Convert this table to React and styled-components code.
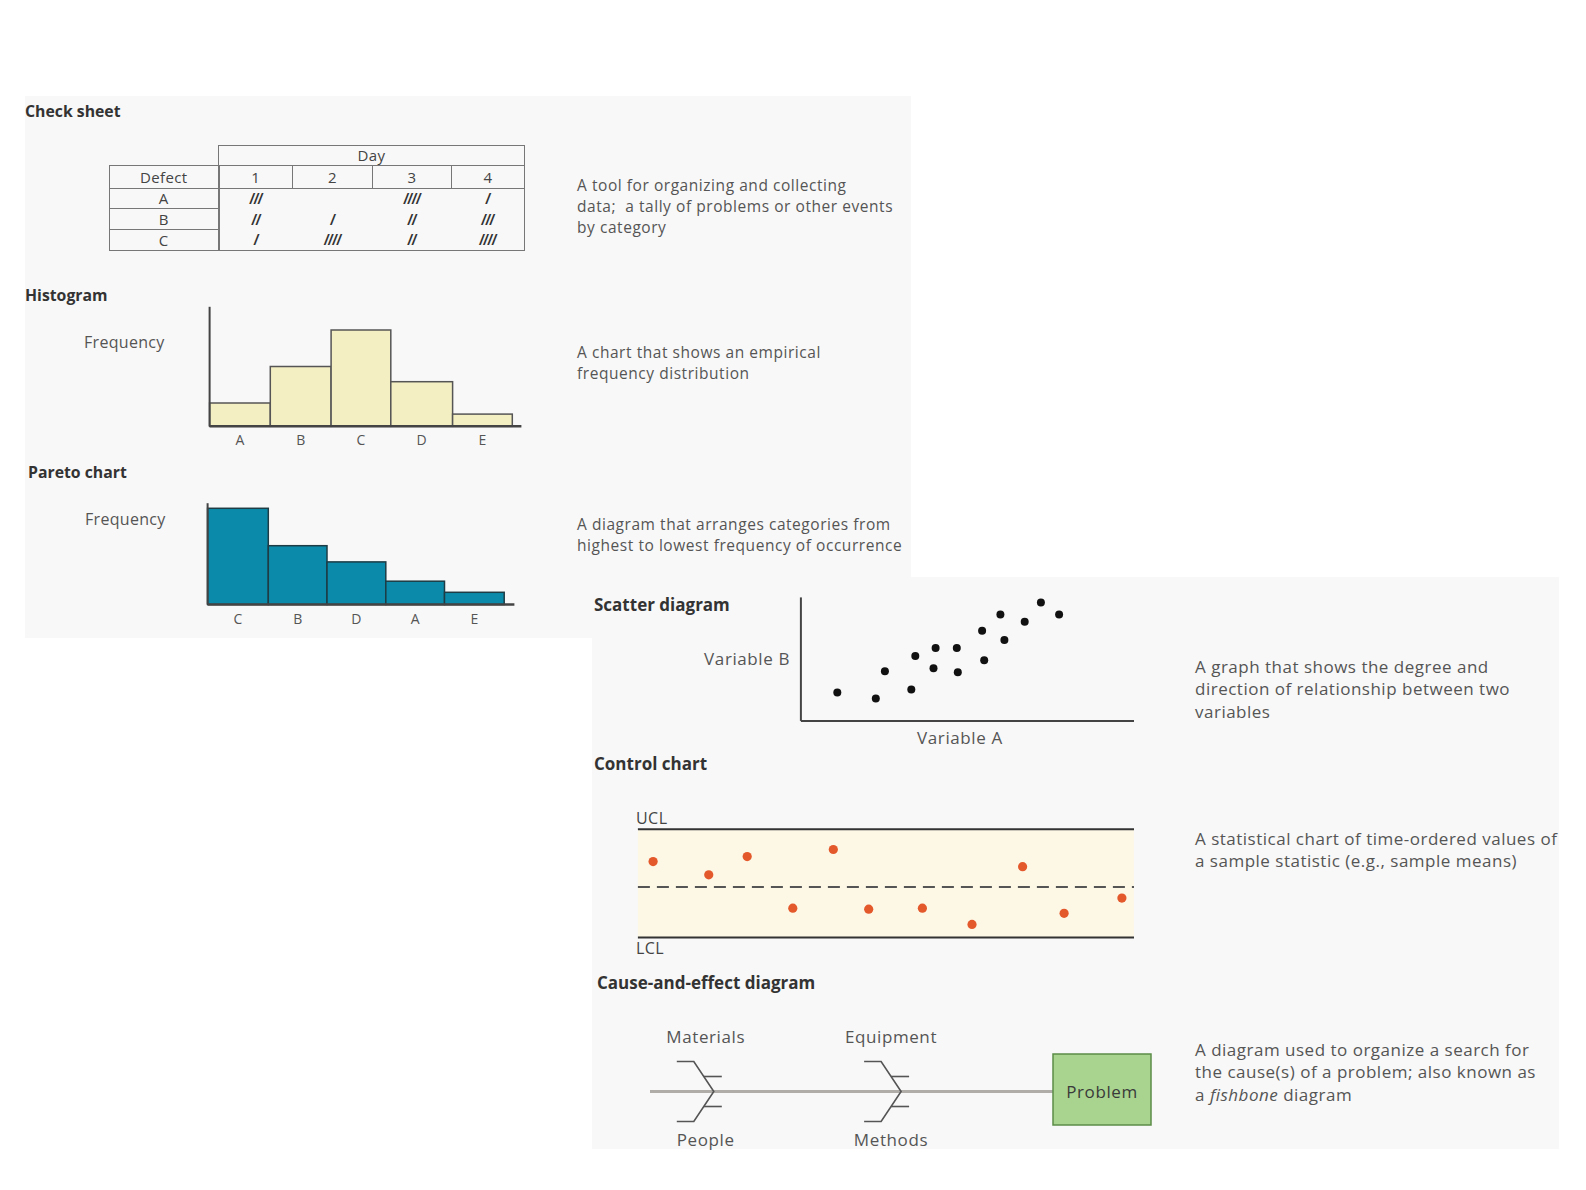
import React from "react";
import styled, { createGlobalStyle } from "styled-components";

const GlobalStyle = createGlobalStyle`
  html, body {
    margin: 0;
    padding: 0;
    background: #fff;
  }
  body {
    font-family: "Open Sans", "Liberation Sans", sans-serif;
    color: #555;
  }
`;

const Page = styled.div`
  width: 1586px;
  height: 1190px;
  padding: 96px 0 0 25px;
  box-sizing: border-box;
  background: #fff;
  overflow: hidden;
`;

const Panel = styled.div`
  position: relative;
  background: #f8f8f8;
  width: ${props => props.$w}px;
  height: ${props => props.$h}px;
  margin-left: ${props => props.$ml || 0}px;
  margin-top: ${props => props.$mt || 0}px;
`;

const Section = styled.section`
  height: ${props => props.$h}px;
  padding-top: ${props => props.$pt}px;
  box-sizing: border-box;
  display: flex;
  flex-direction: column;
`;

const Title = styled.h2`
  margin: ${props => props.$mt || 0}px 0 0 ${props => props.$ml || 0}px;
  font-family: "Open Sans", "Liberation Sans", sans-serif;
  font-size: ${props => (props.$big ? 17 : 15.8)}px;
  line-height: 20px;
  font-weight: 700;
  color: #333;
  white-space: nowrap;
`;

const Body = styled.div`
  display: grid;
  grid-template-columns: ${props => props.$cols};
  flex: 1;
`;

const ChartCell = styled.div`
  display: flex;
  flex-direction: row;
  align-items: flex-start;
  padding-top: ${props => props.$pt || 0}px;
  padding-left: ${props => props.$pl || 0}px;
`;

const SideCol = styled.div`
  display: flex;
  flex-direction: column;
`;

const AxisLabel = styled.div`
  width: ${props => props.$w}px;
  margin-top: ${props => props.$mt || 0}px;
  padding-right: ${props => props.$pr || 0}px;
  box-sizing: border-box;
  text-align: ${props => props.$align || "left"};
  font-size: ${props => (props.$big ? 17 : 16)}px;
  letter-spacing: ${props => (props.$big ? 0.6 : 0.3)}px;
  line-height: 22px;
  color: #555;
  white-space: nowrap;
`;

const Description = styled.p`
  margin: 0;
  padding-top: ${props => props.$pt}px;
  font-size: ${props => (props.$big ? 17 : 15.5)}px;
  letter-spacing: ${props => (props.$big ? 0.5 : 0.55)}px;
  line-height: ${props => (props.$big ? 22.3 : 20.75)}px;
  color: #555;
  white-space: nowrap;
  em {
    font-style: italic;
  }
`;

/* ---------- check sheet ---------- */

const CheckTable = styled.table`
  border-collapse: collapse;
  table-layout: fixed;
  font-family: "Open Sans", "Liberation Sans", sans-serif;
  font-size: 15px;
  letter-spacing: 0.4px;
  color: #444;
  td {
    padding: 0;
    text-align: center;
    vertical-align: middle;
    line-height: 1;
  }
`;

const HeadCell = styled.td`
  border: 1px solid #777;
  height: ${props => props.$h}px;
`;

const BlankCell = styled.td`
  border: none;
`;

const DefectCell = styled.td`
  border: 1px solid #777;
  border-right: 2px solid #777;
  height: ${props => props.$h}px;
`;

const TallyCell = styled.td`
  font-family: "Liberation Sans", Arial, sans-serif;
  font-style: italic;
  font-weight: 700;
  font-size: 15px;
  letter-spacing: 0;
  color: #333;
  border-right: ${props => (props.$last ? "1px solid #777" : "none")};
  border-bottom: ${props => (props.$bottom ? "1px solid #777" : "none")};
`;

const tallyRows = [
  { d: "A", t: ["///", "", "////", "/"], h: 19 },
  { d: "B", t: ["//", "/", "//", "///"], h: 20 },
  { d: "C", t: ["/", "////", "//", "////"], h: 20 }
];

const CheckSheet = () => (
  <CheckTable>
    <colgroup>
      <col style={{ width: 109 }} />
      <col style={{ width: 74 }} />
      <col style={{ width: 80 }} />
      <col style={{ width: 79 }} />
      <col style={{ width: 73 }} />
    </colgroup>
    <tbody>
      <tr>
        <BlankCell />
        <HeadCell colSpan={4} $h={19}>
          Day
        </HeadCell>
      </tr>
      <tr>
        <DefectCell $h={22}>Defect</DefectCell>
        <HeadCell $h={22}>1</HeadCell>
        <HeadCell $h={22}>2</HeadCell>
        <HeadCell $h={22}>3</HeadCell>
        <HeadCell $h={22}>4</HeadCell>
      </tr>
      {tallyRows.map((row, ri) => (
        <tr key={row.d}>
          <DefectCell $h={row.h}>{row.d}</DefectCell>
          {row.t.map((t, i) => (
            <TallyCell
              key={i}
              $last={i === 3}
              $bottom={ri === tallyRows.length - 1}
            >
              {t}
            </TallyCell>
          ))}
        </tr>
      ))}
    </tbody>
  </CheckTable>
);

/* ---------- bar charts ---------- */

const Svg = styled.svg`
  display: block;
  overflow: visible;
  font-family: "Open Sans", "Liberation Sans", sans-serif;
`;

const histBars = [
  { l: "A", x: 9.6, w: 60.7, top: 98 },
  { l: "B", x: 70.3, w: 60.8, top: 61.5 },
  { l: "C", x: 131.1, w: 59.7, top: 25 },
  { l: "D", x: 190.8, w: 61.8, top: 76.7 },
  { l: "E", x: 252.6, w: 59.7, top: 109.1 }
];

const paretoBars = [
  { l: "C", x: 7.6, w: 60.7, top: 26.3 },
  { l: "B", x: 68.3, w: 58.7, top: 63.7 },
  { l: "D", x: 127, w: 58.8, top: 79.9 },
  { l: "A", x: 185.8, w: 58.7, top: 99.2 },
  { l: "E", x: 244.5, w: 59.7, top: 110.3 }
];

const BarChart = ({ bars, base, axisX, axisTop, axisRight, fill, stroke, labelY }) => (
  <Svg width="330" height="150">
    {bars.map(b => (
      <rect
        key={b.l}
        x={b.x}
        y={b.top}
        width={b.w}
        height={base - b.top}
        fill={fill}
        stroke={stroke}
        strokeWidth="1.5"
      />
    ))}
    <line x1={axisX} y1={axisTop} x2={axisX} y2={base} stroke="#444" strokeWidth="2" />
    <line x1={axisX} y1={base} x2={axisRight} y2={base} stroke="#444" strokeWidth="2.5" />
    {bars.map(b => (
      <text
        key={b.l}
        x={b.x + b.w / 2}
        y={labelY}
        textAnchor="middle"
        fontSize="14"
        fill="#555"
      >
        {b.l}
      </text>
    ))}
  </Svg>
);

/* ---------- scatter ---------- */

const scatterDots = [
  [42.3, 100.6], [80.8, 106.6], [89.9, 79.3], [116.3, 97.5], [120.3, 64.1],
  [138.5, 76.3], [140.6, 56], [161.8, 56], [162.8, 80.3], [187.1, 38.8],
  [189.2, 68.2], [205.4, 22.6], [209.4, 47.9], [229.7, 29.7], [245.9, 10.4],
  [264.1, 22.6]
];

const Scatter = () => (
  <Svg width="345" height="160">
    <line x1="5.9" y1="5.4" x2="5.9" y2="128.9" stroke="#444" strokeWidth="2" />
    <line x1="5.9" y1="128.9" x2="339" y2="128.9" stroke="#444" strokeWidth="2" />
    {scatterDots.map(([x, y], i) => (
      <circle key={i} cx={x} cy={y} r="4" fill="#111" />
    ))}
    <text
      x="164.9"
      y="152"
      textAnchor="middle"
      fontSize="17"
      letterSpacing="0.6"
      fill="#555"
    >
      Variable A
    </text>
  </Svg>
);

/* ---------- control chart ---------- */

const controlDots = [
  [31.1, 61.6], [86.75, 74.8], [125.2, 56.6], [170.8, 108.2], [211.3, 49.5],
  [246.7, 109.2], [300.4, 108.2], [350, 124.4], [400.6, 66.7], [442.1, 113.3],
  [499.9, 98.1]
];

const ControlChart = () => (
  <Svg width="515" height="160">
    <rect x="15.9" y="29.2" width="496" height="108.4" fill="#fdf7e6" />
    <text x="13.9" y="23.6" fontSize="16" letterSpacing="0.5" fill="#444">
      UCL
    </text>
    <line x1="15.9" y1="29.2" x2="512" y2="29.2" stroke="#333" strokeWidth="2" />
    <line
      x1="15.9"
      y1="86.9"
      x2="512"
      y2="86.9"
      stroke="#555"
      strokeWidth="2"
      strokeDasharray="12 7"
    />
    <line x1="15.9" y1="137.6" x2="512" y2="137.6" stroke="#333" strokeWidth="2" />
    <text x="13.9" y="154" fontSize="16" letterSpacing="0.5" fill="#444">
      LCL
    </text>
    {controlDots.map(([x, y], i) => (
      <circle key={i} cx={x} cy={y} r="4.6" fill="#e4592b" />
    ))}
  </Svg>
);

/* ---------- fishbone ---------- */

const SPINE = 81.5;

const Bone = ({ ax }) => (
  <g stroke="#555" strokeWidth="1.6" fill="none">
    <path
      d={`M ${ax - 37} ${SPINE - 30} H ${ax - 20} L ${ax} ${SPINE} L ${ax - 20} ${SPINE + 30} H ${ax - 37}`}
    />
    <path d={`M ${ax - 10} ${SPINE - 15} H ${ax + 8}`} />
    <path d={`M ${ax - 10} ${SPINE + 15} H ${ax + 8}`} />
  </g>
);

const boneLabels = [
  { t: "Materials", x: 68.7, y: 33 },
  { t: "Equipment", x: 254, y: 33 },
  { t: "People", x: 68.7, y: 136 },
  { t: "Methods", x: 254, y: 136 }
];

const Fishbone = () => (
  <Svg width="520" height="145">
    <line x1="13" y1={SPINE} x2="416" y2={SPINE} stroke="#b0aca8" strokeWidth="3" />
    <Bone ax={76.8} />
    <Bone ax={264.1} />
    {boneLabels.map(l => (
      <text
        key={l.t}
        x={l.x}
        y={l.y}
        textAnchor="middle"
        fontSize="17"
        letterSpacing="0.6"
        fill="#555"
      >
        {l.t}
      </text>
    ))}
    <rect x="416" y="44" width="98" height="71" fill="#a9d48f" stroke="#5b8c47" strokeWidth="1.5" />
    <text
      x="465"
      y="87.5"
      textAnchor="middle"
      fontSize="17"
      letterSpacing="0.6"
      fill="#3a3a3a"
    >
      Problem
    </text>
  </Svg>
);

const App = () => (
  <Page>
    <GlobalStyle />
    <Panel $w={886} $h={542}>
      <Section $h={186} $pt={5}>
        <Title>Check sheet</Title>
        <Body $cols="552px 1fr">
          <ChartCell $pt={24} $pl={84}>
            <CheckSheet />
          </ChartCell>
          <Description $pt={54}>
            A tool for organizing and collecting
            <br />
            data;&nbsp; a tally of problems or other events
            <br />
            by category
          </Description>
        </Body>
      </Section>

      <Section $h={177} $pt={3}>
        <Title>Histogram</Title>
        <Body $cols="552px 1fr">
          <ChartCell $pl={59}>
            <AxisLabel $w={116} $mt={26}>
              Frequency
            </AxisLabel>
            <BarChart
              bars={histBars}
              base={121.3}
              axisX={9.6}
              axisTop={1.8}
              axisRight={321.4}
              fill="#f4efc3"
              stroke="#555"
              labelY={140.3}
            />
          </ChartCell>
          <Description $pt={37}>
            A chart that shows an empirical
            <br />
            frequency distribution
          </Description>
        </Body>
      </Section>

      <Section $h={179} $pt={3}>
        <Title $ml={3}>Pareto chart</Title>
        <Body $cols="552px 1fr">
          <ChartCell $pl={60}>
            <AxisLabel $w={115} $mt={26}>
              Frequency
            </AxisLabel>
            <BarChart
              bars={paretoBars}
              base={122.5}
              axisX={7.6}
              axisTop={21.2}
              axisRight={314.4}
              fill="#0b8ba9"
              stroke="#1d3c46"
              labelY={141.6}
            />
          </ChartCell>
          <Description $pt={32}>
            A diagram that arranges categories from
            <br />
            highest to lowest frequency of occurrence
          </Description>
        </Body>
      </Section>
    </Panel>

    <Panel $w={967} $h={572} $ml={567} $mt={-61}>
      <Section $h={173} $pt={15}>
        <Body $cols="203px 400px 1fr">
          <SideCol>
            <Title $big $ml={2} $mt={3}>
              Scatter diagram
            </Title>
            <AxisLabel $big $w={203} $mt={33} $pr={5} $align="right">
              Variable B
            </AxisLabel>
          </SideCol>
          <ChartCell>
            <Scatter />
          </ChartCell>
          <Description $big $pt={64}>
            A graph that shows the degree and
            <br />
            direction of relationship between two
            <br />
            variables
          </Description>
        </Body>
      </Section>

      <Section $h={218} $pt={4}>
        <Title $big $ml={2}>
          Control chart
        </Title>
        <Body $cols="603px 1fr">
          <ChartCell $pt={26} $pl={30}>
            <ControlChart />
          </ChartCell>
          <Description $big $pt={54}>
            A statistical chart of time-ordered values of
            <br />
            a sample statistic (e.g., sample means)
          </Description>
        </Body>
      </Section>

      <Section $h={181} $pt={5}>
        <Title $big $ml={5}>
          Cause-and-effect diagram
        </Title>
        <Body $cols="603px 1fr">
          <ChartCell $pt={17} $pl={45}>
            <Fishbone />
          </ChartCell>
          <Description $big $pt={46}>
            A diagram used to organize a search for
            <br />
            the cause(s) of a problem; also known as
            <br />a <em>fishbone</em> diagram
          </Description>
        </Body>
      </Section>
    </Panel>
  </Page>
);

export default App;
